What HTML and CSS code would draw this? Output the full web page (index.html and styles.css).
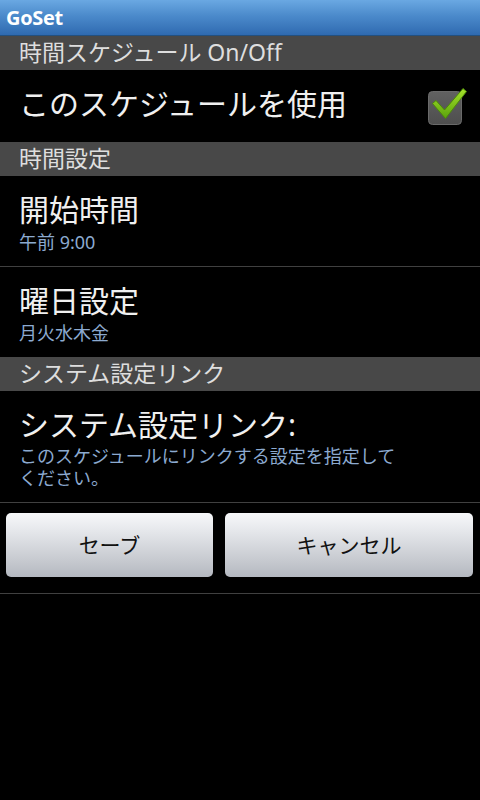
FILE: index.html
```html
<!DOCTYPE html>
<html lang="ja">
<head>
<meta charset="utf-8">
<title>GoSet</title>
<link rel="stylesheet" href="styles.css">
</head>
<body>
<div class="titlebar">GoSet</div>

<div class="cat">時間スケジュール On/Off</div>
<div class="check-row">
  <div class="check-title">このスケジュールを使用</div>
  <svg class="checkbox" width="44" height="44" viewBox="0 0 44 44">
    <defs>
      <linearGradient id="boxg" x1="0" y1="0" x2="0" y2="1">
        <stop offset="0" stop-color="#616161"/>
        <stop offset="1" stop-color="#4e4e4e"/>
      </linearGradient>
      <linearGradient id="chk" x1="0" y1="0" x2="0" y2="1">
        <stop offset="0" stop-color="#a6e22a"/>
        <stop offset="1" stop-color="#5aa30c"/>
      </linearGradient>
    </defs>
    <rect x="4.5" y="8.5" width="33" height="33" rx="4" fill="url(#boxg)" stroke="#6a6a6a"/>
    <path d="M8.5 20.5 L12 17.5 L20.5 27 L39 5.5 L42.5 8.5 L21.5 35.5 Z" fill="url(#chk)" stroke="#4c8a08" stroke-width="1" stroke-linejoin="round"/>
  </svg>
</div>

<div class="cat">時間設定</div>
<div class="pref pref-a">
  <div class="pref-title">開始時間</div>
  <div class="pref-summary">午前 9:00</div>
</div>
<div class="pref pref-b">
  <div class="pref-title">曜日設定</div>
  <div class="pref-summary">月火水木金</div>
</div>

<div class="cat">システム設定リンク</div>
<div class="pref pref-c">
  <div class="pref-title">システム設定リンク:</div>
  <div class="pref-summary wrap">このスケジュールにリンクする設定を指定してください。</div>
</div>

<div class="buttons">
  <div class="btn btn-save">セーブ</div>
  <div class="btn btn-cancel">キャンセル</div>
</div>
</body>
</html>
```

FILE: styles.css
```css
html, body {
  margin: 0;
  padding: 0;
  background: #000;
}
body {
  width: 480px;
  height: 800px;
  font-family: "Noto Sans", "Noto Sans CJK JP", sans-serif;
  color: #f0f0f0;
  overflow: hidden;
}
.titlebar {
  height: 35px;
  line-height: 35px;
  padding-left: 6px;
  background: linear-gradient(to bottom, #6aa8e2 0%, #4b8acb 45%, #2f6ab0 100%);
  border-bottom: 1px solid #23507f;
  color: #fff;
  font-family: "Open Sans", "Noto Sans", sans-serif;
  font-weight: 700;
  font-size: 20px;
  letter-spacing: -0.3px;
}
.cat {
  height: 34px;
  line-height: 33px;
  padding-left: 19px;
  background: #484848;
  color: #dedede;
  font-size: 23px;
}
.check-row {
  height: 72px;
  display: flex;
  align-items: center;
  justify-content: space-between;
  padding: 0 12px 0 19px;
  box-sizing: border-box;
}
.check-title {
  font-size: 30px;
  line-height: 34px;
  margin-top: -4px;
  color: #f0f0f0;
}
.checkbox {
  display: block;
  margin-top: -2px;
}
.pref {
  box-sizing: border-box;
  padding: 17px 19px 0 19px;
}
.pref-a {
  height: 91px;
  border-bottom: 1px solid #404040;
}
.pref-b {
  height: 90px;
}
.pref-c {
  height: 112px;
  border-bottom: 1px solid #404040;
}
.pref-title {
  font-size: 30px;
  line-height: 34px;
  color: #f0f0f0;
}
.pref-summary {
  font-size: 18px;
  line-height: 22px;
  margin-top: 4px;
  color: #8caad0;
}
.wrap {
  width: 386px;
  font-size: 18px;
  line-height: 21.5px;
}
.buttons {
  display: flex;
  gap: 12px;
  padding: 10px 7px 16px 6px;
  border-bottom: 1px solid #404040;
}
.btn {
  height: 64px;
  line-height: 64px;
  text-align: center;
  border-radius: 5px;
  background: linear-gradient(to bottom, #f7f8fa 0%, #e4e6ea 30%, #c6c9cf 75%, #b4b8c0 100%);
  color: #111;
  font-size: 21px;
}
.btn-save {
  flex: 0 0 207px;
}
.btn-cancel {
  flex: 1 1 auto;
}
```
